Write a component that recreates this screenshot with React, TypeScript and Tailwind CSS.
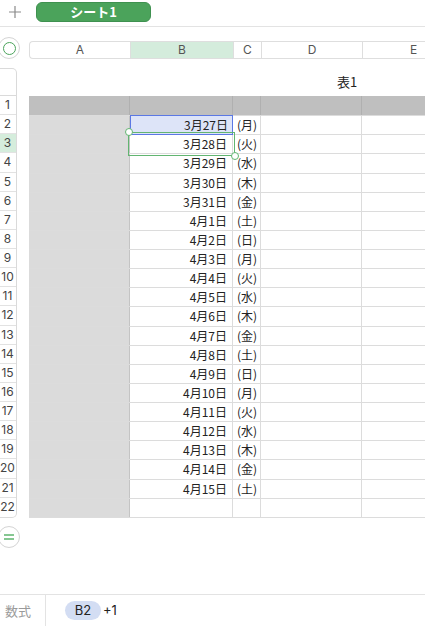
import React from "react";

const days = ["月", "火", "水", "木", "金", "土", "日"];
const rows: { date: string; day: string }[] = [];
for (let i = 0; i < 20; i++) {
  const d = 27 + i;
  const date = d <= 31 ? `3月${d}日` : `4月${d - 31}日`;
  rows.push({ date, day: `(${days[i % 7]})` });
}

const font = { fontFamily: '"Noto Sans CJK JP", "Noto Sans", sans-serif' };
const latin = { fontFamily: 'Inter, "Noto Sans", sans-serif' };

export default function App() {
  return (
    <div className="w-[425px] h-[626px] bg-white overflow-hidden relative flex flex-col" style={font}>
      {/* top bar */}
      <div className="h-[27px] border-b border-[#e3e3e3] flex items-center shrink-0">
        <div className="w-[36px] flex justify-center pl-[1px]">
          <svg width="14" height="14" viewBox="0 0 14 14" className="-translate-x-[4px] -translate-y-[1px]">
            <path d="M7 1v12M1 7h12" stroke="#8a8a8a" strokeWidth="1.2" />
          </svg>
        </div>
        <div className="w-[115px] h-[20px] -mt-[3px] rounded-[6px] bg-[#4ba35b] border border-[#3f9150] flex items-center justify-center text-white text-[13px] font-bold">
          シート1
        </div>
      </div>

      <div className="flex flex-1">
        {/* left rail */}
        <div className="w-[29px] flex flex-col shrink-0">
          <div className="mt-[10px] -ml-[2px] w-[22px] h-[22px] rounded-full border border-[#d4d4d4] bg-white flex items-center justify-center">
            <div className="w-[13px] h-[13px] rounded-full border-[1.5px] border-[#4ba35b]" />
          </div>
          <div className="mt-[9px] w-[17px] border border-l-0 border-[#dadada] rounded-r-[5px] flex flex-col">
            <div className="h-[27px] border-b border-[#dadada]" />
            {Array.from({ length: 22 }).map((_, i) => (
              <div
                key={i}
                className={`h-[19.14px] flex items-center justify-center text-[12px] text-[#444] pr-[1px] ${i < 21 ? "border-b border-[#e2e2e2]" : ""} ${i === 2 ? "bg-[#d5eddc]" : ""}`}
                style={latin}
              >
                {i + 1}
              </div>
            ))}
          </div>
          <div className="mt-[8px] -ml-[2px] w-[22px] h-[22px] rounded-full border border-[#d4d4d4] bg-white flex items-center justify-center">
            <svg width="10" height="6" viewBox="0 0 10 6">
              <path d="M0 1h10M0 5h10" stroke="#5fb56f" strokeWidth="1.4" />
            </svg>
          </div>
        </div>

        {/* main */}
        <div className="flex flex-col flex-1 min-w-0 overflow-hidden">
          <div
            className="mt-[14px] h-[18px] w-[434px] flex border border-r-0 border-[#dedede] rounded-l-[4px] text-[12px] text-[#555] shrink-0"
            style={latin}
          >
            <div className="w-[101px] shrink-0 border-r border-[#dedede] flex items-center justify-center">A</div>
            <div className="w-[103px] shrink-0 border-r border-[#dedede] bg-[#d4ecdc] flex items-center justify-center">B</div>
            <div className="w-[28px] shrink-0 border-r border-[#dedede] flex items-center justify-center">C</div>
            <div className="w-[101px] shrink-0 border-r border-[#dedede] flex items-center justify-center">D</div>
            <div className="w-[101px] shrink-0 flex items-center justify-center">E</div>
          </div>
          <div className="h-[37px] flex items-end shrink-0">
            <div className="ml-[308px] mb-[5px] text-[13px] text-[#222]">表1</div>
          </div>

          {/* table */}
          <div className="relative w-[434px] shrink-0 text-[12px] text-[#222]">
            <div className="flex h-[19.14px] bg-[#bfbfbf]">
              <div className="w-[101px] shrink-0 border-r border-[#b0b0b0]" />
              <div className="w-[103px] shrink-0 border-r border-[#b0b0b0]" />
              <div className="w-[28px] shrink-0 border-r border-[#b0b0b0]" />
              <div className="w-[101px] shrink-0 border-r border-[#b0b0b0]" />
              <div className="w-[101px] shrink-0" />
            </div>
            {[...rows, { date: "", day: "" }].map((r, i) => (
              <div key={i} className="flex h-[19.14px] border-t border-[#dcdcdc]">
                <div className="w-[101px] shrink-0 bg-[#dbdbdb] border-r border-[#c4c4c4]" />
                <div className="w-[103px] shrink-0 border-r border-[#dcdcdc] flex items-center justify-end pr-[5px]">{r.date}</div>
                <div className="w-[28px] shrink-0 border-r border-[#dcdcdc] flex items-center pl-[4px]">{r.day}</div>
                <div className="w-[101px] shrink-0 border-r border-[#dcdcdc]" />
                <div className="w-[101px] shrink-0" />
              </div>
            ))}
            <div className="border-t border-[#dcdcdc]" />

            {/* selections */}
            <div className="absolute left-[101px] top-[19px] w-[103px] h-[20px] bg-[#dde4f8] border border-[#5b78e4] flex items-center justify-end pr-[4px]">
              3月27日
            </div>
            <div className="absolute left-[99px] top-[36px] w-[107px] h-[24px] border border-[#62b571]" />
            <div className="absolute left-[96px] top-[32px] w-[8px] h-[8px] rounded-full bg-white border border-[#62b571]" />
            <div className="absolute left-[202px] top-[56px] w-[8px] h-[8px] rounded-full bg-white border border-[#62b571]" />
          </div>
        </div>
      </div>

      {/* bottom formula bar */}
      <div className="h-[32px] border-t border-[#e3e3e3] flex items-stretch shrink-0">
        <div className="w-[46px] border-r border-[#e3e3e3] flex items-center pl-[5px] text-[13px] text-[#9a9a9a]">数式</div>
        <div className="flex items-center pl-[19px]">
          <div className="w-[36px] h-[19px] rounded-full bg-[#d3ddf3] flex items-center justify-center text-[13px] text-[#222]" style={latin}>
            B2
          </div>
          <span className="ml-[2px] text-[13px] text-[#222]" style={latin}>+1</span>
        </div>
      </div>
    </div>
  );
}
